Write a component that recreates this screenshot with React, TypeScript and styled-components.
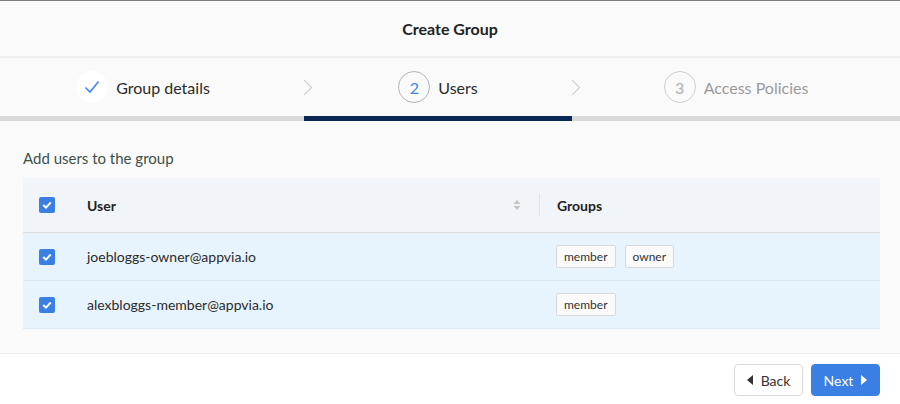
import styled, { createGlobalStyle } from "styled-components";

const GlobalStyle = createGlobalStyle`
  html, body {
    margin: 0;
    padding: 0;
    background: #ffffff;
    font-family: Lato, "Noto Sans", sans-serif;
    color: #333;
  }
  * { box-sizing: border-box; }
`;

type Step = {
  label: string;
  state: "done" | "active" | "waiting";
  width: string;
};

const steps: Step[] = [
  { label: "Group details", state: "done", width: "304px" },
  { label: "Users", state: "active", width: "268px" },
  { label: "Access Policies", state: "waiting", width: "1fr" },
];

const users = [
  { email: "joebloggs-owner@appvia.io", groups: ["member", "owner"] },
  { email: "alexbloggs-member@appvia.io", groups: ["member"] },
];

const CreateGroup = () => {
  return (
    <Modal>
      <GlobalStyle />
      <Header>Create Group</Header>

      <Steps $cols={steps.map((s) => s.width).join(" ")}>
        {steps.map((step, i) => (
          <StepItem key={step.label} $state={step.state} $last={i === steps.length - 1} $first={i === 0}>
            <StepIcon $state={step.state}>
              {step.state === "done" ? (
                <svg width="16" height="14" viewBox="0 0 16 14">
                  <path d="M1.5 7.5 L6 12 L14.5 1.5" fill="none" stroke="#3d86f0" strokeWidth="1.6" />
                </svg>
              ) : (
                i + 1
              )}
            </StepIcon>
            <StepLabel $state={step.state}>{step.label}</StepLabel>
          </StepItem>
        ))}
      </Steps>

      <Body>
        <Intro>Add users to the group</Intro>
        <Table>
          <HeadRow>
            <CheckCell>
              <Checkbox />
            </CheckCell>
            <HeadCell>
              User
              <SortIcon width="8" height="12" viewBox="0 0 8 12">
                <path d="M4 1 L7.5 5 H0.5 Z" fill="#c4c4c4" />
                <path d="M4 11 L7.5 7 H0.5 Z" fill="#c4c4c4" />
              </SortIcon>
              <Divider />
            </HeadCell>
            <HeadCell $indent>Groups</HeadCell>
          </HeadRow>
          {users.map((u) => (
            <Row key={u.email}>
              <CheckCell>
                <Checkbox />
              </CheckCell>
              <Cell>{u.email}</Cell>
              <Cell $indent>
                {u.groups.map((g) => (
                  <Tag key={g}>{g}</Tag>
                ))}
              </Cell>
            </Row>
          ))}
        </Table>
      </Body>

      <Footer>
        <Button>
          <svg width="6" height="10" viewBox="0 0 6 10">
            <path d="M6 0 V10 L0 5 Z" fill="#333" />
          </svg>
          Back
        </Button>
        <Button $primary>
          Next
          <svg width="6" height="10" viewBox="0 0 6 10">
            <path d="M0 0 V10 L6 5 Z" fill="#fff" />
          </svg>
        </Button>
      </Footer>
    </Modal>
  );
};

const Checkbox = () => (
  <Box>
    <svg width="10" height="8" viewBox="0 0 10 8">
      <path d="M1.2 4 L4 6.6 L8.8 1.4" fill="none" stroke="#fff" strokeWidth="2" />
    </svg>
  </Box>
);

const Modal = styled.div`
  width: 900px;
  height: 404px;
  display: flex;
  flex-direction: column;
  border-top: 1px solid #7d7d7d;
  background: #fafafa;
  overflow: hidden;
`;

const Header = styled.div`
  height: 57px;
  display: flex;
  align-items: center;
  justify-content: center;
  font-size: 16px;
  font-weight: 700;
  color: #222;
  border-bottom: 2px solid #efefef;
`;

const Steps = styled.div<{ $cols: string }>`
  display: grid;
  grid-template-columns: ${({ $cols }) => $cols};
  background: #fafafa;
`;

const StepItem = styled.div<{ $state: string; $last: boolean; $first: boolean }>`
  position: relative;
  height: 63px;
  display: flex;
  align-items: center;
  justify-content: center;
  gap: 8px;
  padding-top: 2px;
  padding-bottom: 2px;
  padding-right: ${({ $first }) => ($first ? "18px" : "0")};
  border-bottom: 5px solid ${({ $state }) => ($state === "active" ? "#0b2756" : "#d9d9d9")};

  &::after {
    content: "";
    display: ${({ $last }) => ($last ? "none" : "block")};
    position: absolute;
    right: -6px;
    top: 24px;
    width: 10px;
    height: 10px;
    border-top: 1px solid #c8c8c8;
    border-right: 1px solid #c8c8c8;
    transform: rotate(45deg);
    z-index: 1;
  }
`;

const StepIcon = styled.div<{ $state: string }>`
  width: 32px;
  height: 32px;
  border-radius: 50%;
  display: flex;
  align-items: center;
  justify-content: center;
  font-size: 16px;
  background: ${({ $state }) => ($state === "done" ? "#ffffff" : "transparent")};
  border: 1px solid
    ${({ $state }) =>
      $state === "done" ? "#ffffff" : $state === "active" ? "#b5b5b5" : "#cfcfcf"};
  color: ${({ $state }) => ($state === "active" ? "#3d86f0" : "#b0b0b0")};
`;

const StepLabel = styled.span<{ $state: string }>`
  font-size: 16px;
  color: ${({ $state }) => ($state === "waiting" ? "#9a9a9a" : "#2b2b2b")};
`;

const Body = styled.div`
  flex: 1;
  padding: 27px 20px 24px 23px;
  display: flex;
  flex-direction: column;
  border-bottom: 1px solid #ebebeb;
`;

const Intro = styled.div`
  font-size: 15px;
  color: #3d5049;
  line-height: 20px;
  margin-bottom: 10px;
`;

const Table = styled.div`
  display: flex;
  flex-direction: column;
`;

const HeadRow = styled.div`
  display: grid;
  grid-template-columns: 64px 453px 1fr;
  height: 55px;
  align-items: center;
  background: #f1f5f9;
  border-bottom: 1px solid #dcdcdc;
`;

const Row = styled.div`
  display: grid;
  grid-template-columns: 64px 453px 1fr;
  height: 48px;
  align-items: center;
  background: #e8f4fd;
  border-bottom: 1px solid #d9e9f6;
`;

const CheckCell = styled.div`
  display: flex;
  padding-left: 16px;
`;

const HeadCell = styled.div<{ $indent?: boolean }>`
  height: 100%;
  display: flex;
  align-items: center;
  padding-left: ${({ $indent }) => ($indent ? "17px" : "0")};
  font-size: 14px;
  font-weight: 700;
  color: #222;
`;

const SortIcon = styled.svg`
  margin-left: auto;
  margin-right: 18px;
`;

const Divider = styled.span`
  width: 1px;
  height: 22px;
  background: #e0e4e8;
`;

const Cell = styled.div<{ $indent?: boolean }>`
  display: flex;
  align-items: center;
  gap: 9px;
  padding-left: ${({ $indent }) => ($indent ? "16px" : "0")};
  font-size: 14px;
  color: #2b2b2b;
`;

const Tag = styled.span`
  height: 23px;
  display: inline-flex;
  align-items: center;
  padding: 0 7px;
  font-size: 12px;
  color: #333;
  background: #fafafa;
  border: 1px solid #d9d9d9;
  border-radius: 2px;
`;

const Box = styled.span`
  width: 16px;
  height: 16px;
  border-radius: 2px;
  background: #3b7ee4;
  display: flex;
  align-items: center;
  justify-content: center;
`;

const Footer = styled.div`
  height: 50px;
  background: #ffffff;
  display: flex;
  align-items: center;
  justify-content: flex-end;
  gap: 8px;
  padding: 2px 20px 0;
`;

const Button = styled.button<{ $primary?: boolean }>`
  height: 32px;
  width: 69px;
  display: inline-flex;
  align-items: center;
  justify-content: center;
  gap: 8px;
  font-family: Lato, "Noto Sans", sans-serif;
  font-size: 14px;
  border-radius: 4px;
  cursor: pointer;
  color: ${({ $primary }) => ($primary ? "#ffffff" : "#333")};
  background: ${({ $primary }) => ($primary ? "#3b7ee4" : "#ffffff")};
  border: 1px solid ${({ $primary }) => ($primary ? "#3b7ee4" : "#d9d9d9")};
`;

export default CreateGroup;
